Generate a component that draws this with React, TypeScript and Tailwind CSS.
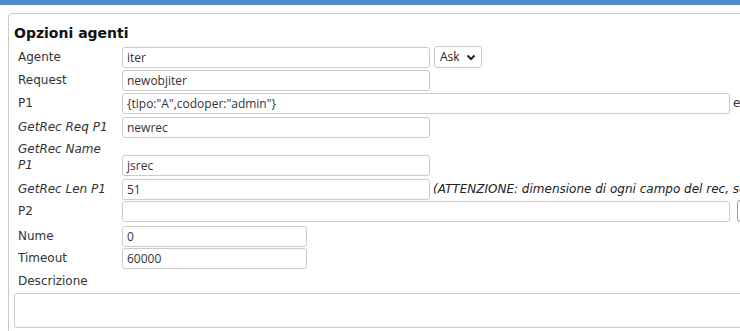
import type { ReactNode } from 'react'

const labelFont = { fontFamily: '"DejaVu Sans", Verdana, sans-serif' }
const inputFont = { fontFamily: '"Open Sans", "Noto Sans", sans-serif' }

function Field({ value, width }: { value: string; width: string }) {
  return (
    <div
      className={`mt-[1px] flex h-[21px] shrink-0 items-center rounded-[3px] border border-[#cbcbcb] bg-white px-[4px] text-[12px] text-[#333] ${width}`}
      style={inputFont}
    >
      {value}
    </div>
  )
}

function Row({
  label,
  italic,
  height,
  children,
}: {
  label: string
  italic?: boolean
  height: string
  children: ReactNode
}) {
  return (
    <div className={`flex items-start ${height}`}>
      <div
        className={`mt-[3px] w-[108px] shrink-0 pl-[4px] pr-[8px] text-[12px] leading-[17px] text-[#333] ${italic ? 'italic' : ''}`}
      >
        {label}
      </div>
      {children}
    </div>
  )
}

export default function App() {
  return (
    <div className="relative h-[331px] w-[740px] overflow-hidden bg-white" style={labelFont}>
      <div className="h-[5px] bg-[#508bca]" />

      {/* Options panel */}
      <div className="ml-[8px] mt-[8px] w-[780px] rounded-[4px] border border-[#cccccc] bg-white pl-[5px] pt-[10px] pb-[10px]">
        <h2 className="text-[14px] font-bold leading-[18px] text-[#111]">Opzioni agenti</h2>

        <div className="mt-[4px]">
          <Row label="Agente" height="h-[23px]">
            <Field value="iter" width="w-[308px]" />
            <div
              className="ml-[4px] flex h-[22px] w-[48px] items-center justify-between rounded-[3px] border border-[#cbcbcb] bg-white pl-[5px] pr-[5px] text-[12px] text-[#222]"
              style={inputFont}
            >
              <span>Ask</span>
              <svg viewBox="0 0 10 10" className="h-[10px] w-[10px]">
                <polyline points="1.5,3.5 5,7 8.5,3.5" fill="none" stroke="#222" strokeWidth="2" />
              </svg>
            </div>
          </Row>

          <Row label="Request" height="h-[23px]">
            <Field value="newobjiter" width="w-[308px]" />
          </Row>

          <Row label="P1" height="h-[24px]">
            <Field value={'{tipo:"A",codoper:"admin"}'} width="w-[608px]" />
            <span className="ml-[3px] mt-[3px] whitespace-nowrap text-[12px] leading-[17px] text-[#333]">
              es.: &#123;campo:"valore"&#125;
            </span>
          </Row>

          <Row label="GetRec Req P1" italic height="h-[23px]">
            <Field value="newrec" width="w-[308px]" />
          </Row>

          <div className="flex h-[39px] items-start">
            <div className="mt-[2px] w-[108px] shrink-0 pl-[4px] pr-[8px] text-[12px] italic leading-[16px] text-[#333]">
              GetRec Name P1
            </div>
            <div className="mt-[15px]">
              <Field value="jsrec" width="w-[308px]" />
            </div>
          </div>

          <Row label="GetRec Len P1" italic height="h-[22px]">
            <Field value="51" width="w-[308px]" />
            <span className="ml-[3px] mt-[3px] whitespace-nowrap text-[12px] italic leading-[17px] text-[#222]">
              (ATTENZIONE: dimensione di ogni campo del rec, separati da virgola)
            </span>
          </Row>

          <Row label="P2" height="h-[25px]">
            <Field value="" width="w-[608px]" />
            <div className="ml-[7px] h-[22px] w-[40px] shrink-0 rounded-[3px] border border-[#9a9a9a] bg-white" />
          </Row>

          <Row label="Nume" height="h-[22px]">
            <Field value="0" width="w-[185px]" />
          </Row>

          <Row label="Timeout" height="h-[23px]">
            <Field value="60000" width="w-[185px]" />
          </Row>

          <div className="mt-[3px] px-[4px] text-[12px] leading-[17px] text-[#333]">Descrizione</div>
          <div className="mt-[3px] h-[35px] w-[760px] rounded-[3px] border border-[#cbcbcb] bg-white" />
        </div>
      </div>
    </div>
  )
}
